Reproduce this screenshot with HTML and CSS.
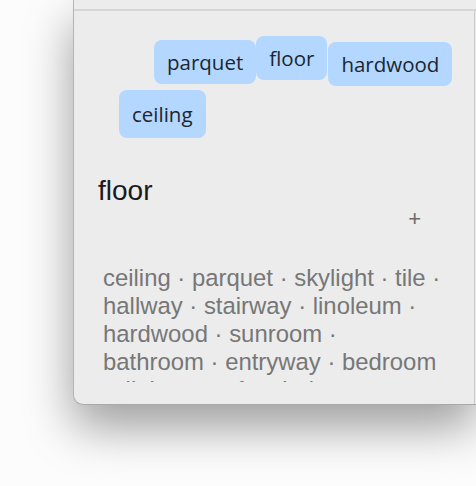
FILE: index.html
```html
<!DOCTYPE html>
<html>

<head>
  <meta charset="utf-8" />
  <meta name="viewport" content="width=device-width, initial-scale=1" />
  <title>Words</title>
  <link rel="stylesheet" href="styles.css">
</head>

<body>
  <div class="desk">
    <div class="window">
      <div class="toolbar"></div>
      <div class="pane">
        <div class="chips">
          <div class="chip-row first-row">
            <span class="chip chip-parquet">parquet</span>
            <span class="chip chip-floor">floor</span>
            <span class="chip chip-hardwood">hardwood</span>
          </div>
          <div class="chip-row second-row">
            <span class="chip chip-ceiling">ceiling</span>
          </div>
        </div>
        <div class="word">floor</div>
        <div class="add-row"><span class="add">+</span></div>
        <p class="related">ceiling · parquet · skylight · tile · hallway · stairway · linoleum · hardwood · sunroom · bathroom · entryway · bedroom · dining · roof · window · carpet · doorway</p>
      </div>
    </div>
  </div>
</body>

</html>
```

FILE: styles.css
```css
html,
body {
  margin: 0;
  background-color: #fcfcfc;
  height: 486px;
  overflow: hidden;
}

.desk {
  padding-left: 73px;
}

.window {
  box-sizing: border-box;
  width: 403px;
  height: 405px;
  background-color: #ececec;
  border-left: 1px solid #b4b4b4;
  border-bottom: 1px solid #a9a9a9;
  border-radius: 0 0 0 10px;
  box-shadow: 0 22px 48px rgba(0, 0, 0, 0.38);
  display: flex;
  flex-direction: column;
}

.toolbar {
  height: 9px;
  border-bottom: 2px solid #d6d6d6;
}

.pane {
  flex: 1;
  border-right: 1px solid #c9c9c9;
  margin-right: 1px;
  overflow: hidden;
}

/* dragged word tiles */
.chips {
  padding-top: 25px;
}

.chip-row {
  display: flex;
  align-items: flex-start;
}

.first-row {
  padding-left: 80px;
}

.second-row {
  padding-left: 45px;
}

.chip {
  font-family: "Open Sans", "Noto Sans", sans-serif;
  font-size: 20.5px;
  line-height: 28px;
  color: #1c2630;
  background-color: #b3d7ff;
  border-radius: 8px;
  padding: 8px 13px;
}

.chip-parquet {
  margin-top: 4px;
}

.chip-hardwood {
  margin-top: 6px;
  margin-left: 1px;
}

.chip-ceiling {
  margin-top: 4px;
  padding-top: 10px;
  padding-bottom: 10px;
}

.word {
  font-family: "Liberation Sans", Arial, sans-serif;
  font-size: 28px;
  line-height: 32px;
  color: #1a1a1a;
  margin-top: 37px;
  padding-left: 24px;
}

.add-row {
  display: flex;
  justify-content: flex-end;
  padding-right: 53px;
}

.add {
  font-family: "Liberation Sans", Arial, sans-serif;
  font-size: 22px;
  line-height: 24px;
  color: #6a6a6a;
}

.related {
  font-family: "Liberation Sans", Arial, sans-serif;
  font-size: 23.9px;
  line-height: 28px;
  color: #777777;
  margin: 33px 0 0 29px;
  width: 339px;
  height: 118px;
  overflow: hidden;
}
```
